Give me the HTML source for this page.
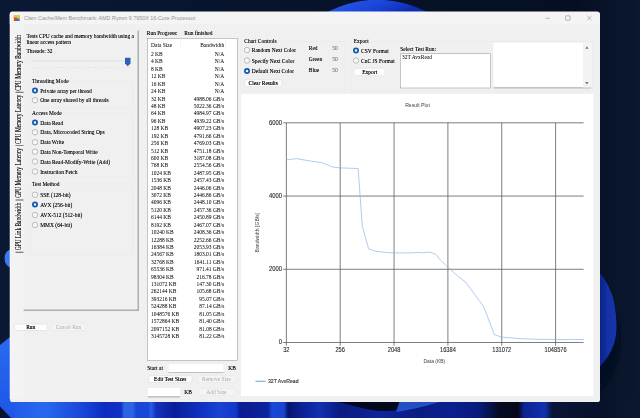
<!DOCTYPE html>
<html><head><meta charset="utf-8"><title>Clam Cache/Mem Benchmark</title>
<style>
html,body{margin:0;padding:0;}
body{width:640px;height:418px;overflow:hidden;position:relative;background:#07142b;font-family:"Liberation Serif",serif;}
#wall{position:absolute;left:0;top:0;}
#win{position:absolute;left:9.8px;top:11.6px;width:590px;height:390px;background:#f0f0f0;border-radius:2.6px;}
.abs{position:absolute;}
.t{position:absolute;height:8px;line-height:8px;font-size:6.6px;color:#000;white-space:nowrap;text-shadow:0 0 0.5px rgba(0,0,0,.55);transform:scaleX(0.83);transform-origin:0 50%;}
.w{text-shadow:0 0 0.4px rgba(0,0,0,.2);color:#111;}
.tr{transform-origin:100% 50%;}
.g{color:#9c9c9c;}
.sans{font-family:"Liberation Sans",sans-serif;}
.r,.rc{position:absolute;width:6px;height:6px;box-sizing:border-box;border-radius:50%;}
.r{border:0.6px solid #858585;background:#f7f7f7;}
.rc{border:1.9px solid #0f5aa8;background:#eaf4ff;}
.gb{position:absolute;box-sizing:border-box;border:0.5px solid #e8e8e8;border-radius:1px;}
.btn{position:absolute;box-sizing:border-box;background:#fdfdfd;border:0.5px solid #d6d6d6;border-radius:1px;font-size:6.6px;text-align:center;white-space:nowrap;color:#000;}
.btn span{display:inline-block;transform:scaleX(0.83);position:relative;top:-0.7px;text-shadow:0 0 0.5px rgba(0,0,0,.75);}
.btn.dis span{text-shadow:none;}
.btn.dis{background:#f5f5f5;border-color:#e4e4e4;color:#a8a8a8;}
.tb{position:absolute;background:#fff;box-shadow:0 0 0 0.4px #e4e4e4;border-radius:0.8px;}
.tb i{position:absolute;left:0;right:0;bottom:0;height:0.6px;background:#8a8a8a;border-radius:0 0 0.8px 0.8px;}
.lb{position:absolute;box-sizing:border-box;background:#fff;border:0.6px solid #8c8c8c;}
</style></head><body>
<svg id="wall" width="640" height="418" viewBox="0 0 640 418">
<defs>
<linearGradient id="bg" x1="0" y1="0" x2="1" y2="0"><stop offset="0" stop-color="#0a1834"/><stop offset="0.4" stop-color="#07142c"/><stop offset="0.9" stop-color="#060f22"/><stop offset="1" stop-color="#0a1830"/></linearGradient>
<linearGradient id="bot" x1="0" y1="0" x2="640" y2="0" gradientUnits="userSpaceOnUse">
<stop offset="0.0000" stop-color="#1d56e6"/><stop offset="0.0703" stop-color="#2868ee"/><stop offset="0.1250" stop-color="#1a48dc"/><stop offset="0.1641" stop-color="#0c2cc0"/>
<stop offset="0.1891" stop-color="#1030c8"/><stop offset="0.1938" stop-color="#2a64e0"/><stop offset="0.2078" stop-color="#2a64e0"/><stop offset="0.2125" stop-color="#1846d8"/>
<stop offset="0.2313" stop-color="#1846d8"/><stop offset="0.2359" stop-color="#2a5ce8"/><stop offset="0.2437" stop-color="#1432b8"/><stop offset="0.2734" stop-color="#0a1e9a"/><stop offset="0.3125" stop-color="#1030c0"/>
<stop offset="0.3438" stop-color="#1a42d4"/><stop offset="0.3688" stop-color="#1238c8"/><stop offset="0.3750" stop-color="#0a1c90"/><stop offset="0.4188" stop-color="#0c249c"/>
<stop offset="0.4250" stop-color="#1a48d8"/><stop offset="0.4437" stop-color="#1a44d0"/><stop offset="0.4500" stop-color="#081470"/><stop offset="0.4688" stop-color="#0c2090"/>
<stop offset="0.5000" stop-color="#1230b0"/><stop offset="0.5312" stop-color="#0a1c80"/><stop offset="0.5938" stop-color="#0c2498"/><stop offset="0.6562" stop-color="#0a1c80"/>
<stop offset="0.7031" stop-color="#0a2090"/><stop offset="0.7500" stop-color="#081a78"/><stop offset="0.7812" stop-color="#040a20"/><stop offset="0.8094" stop-color="#040818"/>
<stop offset="0.8187" stop-color="#0c2490"/><stop offset="0.8516" stop-color="#1030b0"/><stop offset="0.8625" stop-color="#0a1438"/><stop offset="0.9375" stop-color="#07122a"/><stop offset="1.0000" stop-color="#0a1830"/>
</linearGradient>
<linearGradient id="rb" x1="0" y1="0" x2="1" y2="0"><stop offset="0" stop-color="#0a2080"/><stop offset="0.5" stop-color="#1230a4"/><stop offset="1" stop-color="#1736ae"/></linearGradient>
<linearGradient id="tp" x1="0" y1="0" x2="1" y2="0.3"><stop offset="0" stop-color="#2a5cec"/><stop offset="0.6" stop-color="#1a44d8"/><stop offset="1" stop-color="#0c2cb0"/></linearGradient>
<filter id="bl" x="-20%" y="-20%" width="140%" height="140%"><feGaussianBlur stdDeviation="0.6"/></filter><filter id="bl2" x="-30%" y="-30%" width="160%" height="160%"><feGaussianBlur stdDeviation="2"/></filter>
<linearGradient id="lf" x1="0" y1="0" x2="0" y2="1"><stop offset="0" stop-color="#2a6af0"/><stop offset="1" stop-color="#1d56e6"/></linearGradient>
</defs>
<rect width="640" height="418" fill="url(#bg)"/>
<rect x="0" y="396" width="640" height="22" fill="url(#bot)"/>
<path d="M330 400 C350 404 365 411 385 411 C400 411 420 406 445 400 Z" fill="#04081c"/>
<path d="M396 412 C415 409 430 405 446 400 L400 400 Z" fill="#2a5ce0" opacity="0.85"/>
<path d="M500 400 L560 400 L545 418 L500 418 Z" fill="#040818" opacity="0.0"/>
<path d="M0 345 L10 337 L14 337 L14 418 L0 418 Z" fill="url(#lf)"/>
<path d="M0 406.5 L11 418 L0 418 Z" fill="#0a1430"/>
<ellipse cx="11" cy="258.4" rx="6.4" ry="9" fill="#3a7af0"/>
<path d="M598 300 C612 300 621 325 619 345 C617 365 610 380 598 392 Z" fill="#040920" filter="url(#bl2)"/>
<path d="M598 271 C606 279 612 292 614 302 C617 318 617.5 332 614.5 342 C611.5 352 606 361 598 368 Z" fill="url(#rb)" filter="url(#bl)"/>
<path d="M327 12 Q377 -12.5 427.5 12 Z" fill="url(#tp)"/>
</svg>
<div id="win">
<div class="abs" style="left:-9.8px;top:-11.6px;width:2560px;height:1672px;transform:scale(0.25);transform-origin:0 0;"><div class="abs" style="left:0;top:0;width:640px;height:418px;zoom:4;">
<div class="abs" style="left:9.8px;top:11.6px;width:590px;height:12.4px;background:#f4f4f4;border-radius:2.6px 2.6px 0 0;"></div>
<div class="abs" style="left:13.6px;top:15px;width:6.5px;height:6px;background:#e8c840;border-radius:1px;"></div>
<div class="abs" style="left:14px;top:17.5px;width:3px;height:3.5px;background:#c8503c;"></div>
<div class="abs" style="left:16px;top:18.5px;width:3.5px;height:2.5px;background:#4a6ed0;"></div>
<div class="t sans" style="left:24px;top:14.3px;font-size:5.7px;color:#949494;text-shadow:none;transform:scaleX(0.945);">Clam Cache/Mem Benchmark: AMD Ryzen 9 7950X 16-Core Processor</div>
<svg class="abs" style="left:540px;top:12px" width="60" height="14" viewBox="540 12 60 14">
<path d="M545.5 18.3 H549.8" stroke="#8a8a8a" stroke-width="0.6" fill="none"/>
<rect x="565.6" y="15.8" width="4.4" height="4.4" rx="0.6" stroke="#8a8a8a" stroke-width="0.6" fill="none"/>
<path d="M587.2 15.8 L591.6 20.2 M591.6 15.8 L587.2 20.2" stroke="#8a8a8a" stroke-width="0.6" fill="none"/>
</svg>
<div class="abs" style="left:9.8px;top:14px;width:0.9px;height:385px;background:#fcfcfc;"></div>
<div class="abs" style="left:10.7px;top:24px;width:13px;height:375px;background:#f3f3f3;"></div>
<div class="abs" style="left:23.6px;top:30.2px;width:115px;height:280.4px;box-sizing:border-box;border-top:0.5px solid #ececec;border-left:0.5px solid #f0f0f0;border-right:0.8px solid #6e6e6e;border-bottom:0.8px solid #6e6e6e;"></div>
<div class="t" style="left:18.6px;top:90.7px;font-size:7.2px;transform-origin:0 0;transform:translate(-4.1px,0) rotate(-90deg) scaleX(0.752);">CPU Memory Bandwidth</div>
<div class="t" style="left:18.6px;top:144.1px;font-size:7.2px;transform-origin:0 0;transform:translate(-4.1px,0) rotate(-90deg) scaleX(0.752);">CPU Memory Latency</div>
<div class="t" style="left:18.6px;top:197.8px;font-size:7.2px;transform-origin:0 0;transform:translate(-4.1px,0) rotate(-90deg) scaleX(0.752);">GPU Memory Latency</div>
<div class="t" style="left:18.6px;top:250.2px;font-size:7.2px;transform-origin:0 0;transform:translate(-4.1px,0) rotate(-90deg) scaleX(0.752);">GPU Link Bandwidth</div>
<div class="abs" style="left:15.6px;top:91.85px;width:7.8px;height:0.9px;background:#5a5a5a;"></div>
<div class="abs" style="left:15.6px;top:145.15px;width:7.8px;height:0.9px;background:#5a5a5a;"></div>
<div class="abs" style="left:15.6px;top:199.55px;width:7.8px;height:0.9px;background:#5a5a5a;"></div>
<div class="abs" style="left:15.6px;top:251.85px;width:7.8px;height:0.9px;background:#5a5a5a;"></div>
<div class="t " style="left:26.50px;top:31.87px;">Tests CPU cache and memory bandwidth using a</div>
<div class="t " style="left:26.50px;top:37.67px;">linear access pattern</div>
<div class="t " style="left:26.50px;top:46.27px;">Threads: 32</div>
<div class="abs" style="left:31px;top:60.5px;width:99px;height:1.2px;background:#e2e2e2;border-radius:0.6px;"></div>
<svg class="abs" style="left:124px;top:57px" width="8" height="10" viewBox="124 57 8 10"><path d="M125 57.7 H130.5 V63.6 L127.75 66.2 L125 63.6 Z" fill="#2a62b4"/></svg>
<div class="abs" style="left:32.00px;top:67px;width:0.6px;height:1px;background:#d4d4d4;"></div><div class="abs" style="left:35.13px;top:67px;width:0.6px;height:1px;background:#d4d4d4;"></div><div class="abs" style="left:38.26px;top:67px;width:0.6px;height:1px;background:#d4d4d4;"></div><div class="abs" style="left:41.39px;top:67px;width:0.6px;height:1px;background:#d4d4d4;"></div><div class="abs" style="left:44.52px;top:67px;width:0.6px;height:1px;background:#d4d4d4;"></div><div class="abs" style="left:47.65px;top:67px;width:0.6px;height:1px;background:#d4d4d4;"></div><div class="abs" style="left:50.78px;top:67px;width:0.6px;height:1px;background:#d4d4d4;"></div><div class="abs" style="left:53.91px;top:67px;width:0.6px;height:1px;background:#d4d4d4;"></div><div class="abs" style="left:57.04px;top:67px;width:0.6px;height:1px;background:#d4d4d4;"></div><div class="abs" style="left:60.17px;top:67px;width:0.6px;height:1px;background:#d4d4d4;"></div><div class="abs" style="left:63.30px;top:67px;width:0.6px;height:1px;background:#d4d4d4;"></div><div class="abs" style="left:66.43px;top:67px;width:0.6px;height:1px;background:#d4d4d4;"></div><div class="abs" style="left:69.56px;top:67px;width:0.6px;height:1px;background:#d4d4d4;"></div><div class="abs" style="left:72.69px;top:67px;width:0.6px;height:1px;background:#d4d4d4;"></div><div class="abs" style="left:75.82px;top:67px;width:0.6px;height:1px;background:#d4d4d4;"></div><div class="abs" style="left:78.95px;top:67px;width:0.6px;height:1px;background:#d4d4d4;"></div><div class="abs" style="left:82.08px;top:67px;width:0.6px;height:1px;background:#d4d4d4;"></div><div class="abs" style="left:85.21px;top:67px;width:0.6px;height:1px;background:#d4d4d4;"></div><div class="abs" style="left:88.34px;top:67px;width:0.6px;height:1px;background:#d4d4d4;"></div><div class="abs" style="left:91.47px;top:67px;width:0.6px;height:1px;background:#d4d4d4;"></div><div class="abs" style="left:94.60px;top:67px;width:0.6px;height:1px;background:#d4d4d4;"></div><div class="abs" style="left:97.73px;top:67px;width:0.6px;height:1px;background:#d4d4d4;"></div><div class="abs" style="left:100.86px;top:67px;width:0.6px;height:1px;background:#d4d4d4;"></div><div class="abs" style="left:103.99px;top:67px;width:0.6px;height:1px;background:#d4d4d4;"></div><div class="abs" style="left:107.12px;top:67px;width:0.6px;height:1px;background:#d4d4d4;"></div><div class="abs" style="left:110.25px;top:67px;width:0.6px;height:1px;background:#d4d4d4;"></div><div class="abs" style="left:113.38px;top:67px;width:0.6px;height:1px;background:#d4d4d4;"></div><div class="abs" style="left:116.51px;top:67px;width:0.6px;height:1px;background:#d4d4d4;"></div><div class="abs" style="left:119.64px;top:67px;width:0.6px;height:1px;background:#d4d4d4;"></div><div class="abs" style="left:122.77px;top:67px;width:0.6px;height:1px;background:#d4d4d4;"></div><div class="abs" style="left:125.90px;top:67px;width:0.6px;height:1px;background:#d4d4d4;"></div><div class="abs" style="left:129.03px;top:67px;width:0.6px;height:1px;background:#d4d4d4;"></div>
<div class="gb" style="left:29.8px;top:81px;width:103.6px;height:27px;"></div>
<div class="abs" style="left:31px;top:80px;width:39.5px;height:2px;background:#f0f0f0;"></div>
<div class="t" style="left:32px;top:76.67px;">Threading Mode</div>
<div class="rc" style="left:31.90px;top:87.50px"></div>
<div class="t " style="left:40.20px;top:86.17px;">Private array per thread</div>
<div class="r" style="left:31.90px;top:97.30px"></div>
<div class="t " style="left:40.20px;top:95.97px;">One array shared by all threads</div>
<div class="gb" style="left:29.8px;top:113px;width:103.6px;height:64.5px;"></div>
<div class="abs" style="left:31px;top:112px;width:31.2px;height:2px;background:#f0f0f0;"></div>
<div class="t" style="left:32px;top:108.67px;">Access Mode</div>
<div class="rc" style="left:31.90px;top:119.60px"></div>
<div class="t " style="left:40.20px;top:118.27px;">Data Read</div>
<div class="r" style="left:31.90px;top:129.20px"></div>
<div class="t " style="left:40.20px;top:127.87px;">Data, Microcoded String Ops</div>
<div class="r" style="left:31.90px;top:139.20px"></div>
<div class="t " style="left:40.20px;top:137.87px;">Data Write</div>
<div class="r" style="left:31.90px;top:148.80px"></div>
<div class="t " style="left:40.20px;top:147.47px;">Data Non-Temporal Write</div>
<div class="r" style="left:31.90px;top:158.60px"></div>
<div class="t " style="left:40.20px;top:157.27px;">Data Read-Modify-Write (Add)</div>
<div class="r" style="left:31.90px;top:168.60px"></div>
<div class="t " style="left:40.20px;top:167.27px;">Instruction Fetch</div>
<div class="gb" style="left:29.8px;top:183.7px;width:103.6px;height:71.6px;"></div>
<div class="abs" style="left:31px;top:182.7px;width:31.2px;height:2px;background:#f0f0f0;"></div>
<div class="t" style="left:32px;top:179.36999999999998px;">Test Method</div>
<div class="r" style="left:31.90px;top:191.70px"></div>
<div class="t " style="left:40.20px;top:190.37px;">SSE (128-bit)</div>
<div class="rc" style="left:31.90px;top:201.50px"></div>
<div class="t " style="left:40.20px;top:200.17px;">AVX (256-bit)</div>
<div class="r" style="left:31.90px;top:212.00px"></div>
<div class="t " style="left:40.20px;top:210.67px;">AVX-512 (512-bit)</div>
<div class="r" style="left:31.90px;top:222.10px"></div>
<div class="t " style="left:40.20px;top:220.77px;">MMX (64-bit)</div>
<div class="btn" style="left:13.9px;top:323.8px;width:33.7px;height:7px;line-height:6.4px;"><span>Run</span></div>
<div class="btn dis" style="left:51.7px;top:323.8px;width:33.7px;height:7px;line-height:6.4px;"><span>Cancel Run</span></div>
<div class="t " style="left:146.80px;top:29.07px;">Run Progress:</div>
<div class="t " style="left:184.20px;top:29.07px;">Run finished</div>
<div class="lb" style="left:147.2px;top:38.2px;width:90.3px;height:322.2px;"></div>
<div class="t w" style="left:151.00px;top:40.17px;">Data Size</div>
<div class="t tr w" style="left:0.00px;top:40.17px;left:auto;right:415.8px;">Bandwidth</div>
<div class="abs" style="left:180.5px;top:40px;width:0.5px;height:9px;background:#e8e8e8;"></div>
<div class="abs" style="left:225.5px;top:40px;width:0.5px;height:9px;background:#e8e8e8;"></div>
<div class="t w" style="left:151.00px;top:49.67px;">2 KB</div>
<div class="t tr w" style="left:0.00px;top:49.67px;left:auto;right:415.8px;">N/A</div>
<div class="t w" style="left:151.00px;top:57.09px;">4 KB</div>
<div class="t tr w" style="left:0.00px;top:57.09px;left:auto;right:415.8px;">N/A</div>
<div class="t w" style="left:151.00px;top:64.51px;">8 KB</div>
<div class="t tr w" style="left:0.00px;top:64.51px;left:auto;right:415.8px;">N/A</div>
<div class="t w" style="left:151.00px;top:71.93px;">12 KB</div>
<div class="t tr w" style="left:0.00px;top:71.93px;left:auto;right:415.8px;">N/A</div>
<div class="t w" style="left:151.00px;top:79.35px;">16 KB</div>
<div class="t tr w" style="left:0.00px;top:79.35px;left:auto;right:415.8px;">N/A</div>
<div class="t w" style="left:151.00px;top:86.77px;">24 KB</div>
<div class="t tr w" style="left:0.00px;top:86.77px;left:auto;right:415.8px;">N/A</div>
<div class="t w" style="left:151.00px;top:94.19px;">32 KB</div>
<div class="t tr w" style="left:0.00px;top:94.19px;left:auto;right:415.8px;">4988.06 GB/s</div>
<div class="t w" style="left:151.00px;top:101.61px;">48 KB</div>
<div class="t tr w" style="left:0.00px;top:101.61px;left:auto;right:415.8px;">5022.36 GB/s</div>
<div class="t w" style="left:151.00px;top:109.03px;">64 KB</div>
<div class="t tr w" style="left:0.00px;top:109.03px;left:auto;right:415.8px;">4984.97 GB/s</div>
<div class="t w" style="left:151.00px;top:116.45px;">96 KB</div>
<div class="t tr w" style="left:0.00px;top:116.45px;left:auto;right:415.8px;">4939.22 GB/s</div>
<div class="t w" style="left:151.00px;top:123.87px;">128 KB</div>
<div class="t tr w" style="left:0.00px;top:123.87px;left:auto;right:415.8px;">4907.23 GB/s</div>
<div class="t w" style="left:151.00px;top:131.29px;">192 KB</div>
<div class="t tr w" style="left:0.00px;top:131.29px;left:auto;right:415.8px;">4791.66 GB/s</div>
<div class="t w" style="left:151.00px;top:138.71px;">256 KB</div>
<div class="t tr w" style="left:0.00px;top:138.71px;left:auto;right:415.8px;">4769.03 GB/s</div>
<div class="t w" style="left:151.00px;top:146.13px;">512 KB</div>
<div class="t tr w" style="left:0.00px;top:146.13px;left:auto;right:415.8px;">4751.18 GB/s</div>
<div class="t w" style="left:151.00px;top:153.55px;">600 KB</div>
<div class="t tr w" style="left:0.00px;top:153.55px;left:auto;right:415.8px;">3187.08 GB/s</div>
<div class="t w" style="left:151.00px;top:160.97px;">768 KB</div>
<div class="t tr w" style="left:0.00px;top:160.97px;left:auto;right:415.8px;">2554.56 GB/s</div>
<div class="t w" style="left:151.00px;top:168.39px;">1024 KB</div>
<div class="t tr w" style="left:0.00px;top:168.39px;left:auto;right:415.8px;">2487.95 GB/s</div>
<div class="t w" style="left:151.00px;top:175.81px;">1536 KB</div>
<div class="t tr w" style="left:0.00px;top:175.81px;left:auto;right:415.8px;">2457.43 GB/s</div>
<div class="t w" style="left:151.00px;top:183.23px;">2048 KB</div>
<div class="t tr w" style="left:0.00px;top:183.23px;left:auto;right:415.8px;">2446.06 GB/s</div>
<div class="t w" style="left:151.00px;top:190.65px;">3072 KB</div>
<div class="t tr w" style="left:0.00px;top:190.65px;left:auto;right:415.8px;">2446.86 GB/s</div>
<div class="t w" style="left:151.00px;top:198.07px;">4096 KB</div>
<div class="t tr w" style="left:0.00px;top:198.07px;left:auto;right:415.8px;">2448.10 GB/s</div>
<div class="t w" style="left:151.00px;top:205.49px;">5120 KB</div>
<div class="t tr w" style="left:0.00px;top:205.49px;left:auto;right:415.8px;">2457.36 GB/s</div>
<div class="t w" style="left:151.00px;top:212.91px;">6144 KB</div>
<div class="t tr w" style="left:0.00px;top:212.91px;left:auto;right:415.8px;">2450.89 GB/s</div>
<div class="t w" style="left:151.00px;top:220.33px;">8192 KB</div>
<div class="t tr w" style="left:0.00px;top:220.33px;left:auto;right:415.8px;">2467.07 GB/s</div>
<div class="t w" style="left:151.00px;top:227.75px;">10240 KB</div>
<div class="t tr w" style="left:0.00px;top:227.75px;left:auto;right:415.8px;">2408.36 GB/s</div>
<div class="t w" style="left:151.00px;top:235.17px;">12288 KB</div>
<div class="t tr w" style="left:0.00px;top:235.17px;left:auto;right:415.8px;">2252.66 GB/s</div>
<div class="t w" style="left:151.00px;top:242.59px;">16384 KB</div>
<div class="t tr w" style="left:0.00px;top:242.59px;left:auto;right:415.8px;">2053.93 GB/s</div>
<div class="t w" style="left:151.00px;top:250.01px;">24567 KB</div>
<div class="t tr w" style="left:0.00px;top:250.01px;left:auto;right:415.8px;">1803.01 GB/s</div>
<div class="t w" style="left:151.00px;top:257.43px;">32768 KB</div>
<div class="t tr w" style="left:0.00px;top:257.43px;left:auto;right:415.8px;">1641.11 GB/s</div>
<div class="t w" style="left:151.00px;top:264.85px;">65536 KB</div>
<div class="t tr w" style="left:0.00px;top:264.85px;left:auto;right:415.8px;">971.41 GB/s</div>
<div class="t w" style="left:151.00px;top:272.27px;">98304 KB</div>
<div class="t tr w" style="left:0.00px;top:272.27px;left:auto;right:415.8px;">216.78 GB/s</div>
<div class="t w" style="left:151.00px;top:279.69px;">131072 KB</div>
<div class="t tr w" style="left:0.00px;top:279.69px;left:auto;right:415.8px;">147.30 GB/s</div>
<div class="t w" style="left:151.00px;top:287.11px;">262144 KB</div>
<div class="t tr w" style="left:0.00px;top:287.11px;left:auto;right:415.8px;">105.68 GB/s</div>
<div class="t w" style="left:151.00px;top:294.53px;">393216 KB</div>
<div class="t tr w" style="left:0.00px;top:294.53px;left:auto;right:415.8px;">95.07 GB/s</div>
<div class="t w" style="left:151.00px;top:301.95px;">524288 KB</div>
<div class="t tr w" style="left:0.00px;top:301.95px;left:auto;right:415.8px;">87.14 GB/s</div>
<div class="t w" style="left:151.00px;top:309.37px;">1048576 KB</div>
<div class="t tr w" style="left:0.00px;top:309.37px;left:auto;right:415.8px;">81.05 GB/s</div>
<div class="t w" style="left:151.00px;top:316.79px;">1572864 KB</div>
<div class="t tr w" style="left:0.00px;top:316.79px;left:auto;right:415.8px;">81.40 GB/s</div>
<div class="t w" style="left:151.00px;top:324.21px;">2097152 KB</div>
<div class="t tr w" style="left:0.00px;top:324.21px;left:auto;right:415.8px;">81.08 GB/s</div>
<div class="t w" style="left:151.00px;top:331.63px;">3145728 KB</div>
<div class="t tr w" style="left:0.00px;top:331.63px;left:auto;right:415.8px;">81.22 GB/s</div>
<div class="t " style="left:147.20px;top:363.27px;">Start at</div>
<div class="tb" style="left:168.4px;top:363.8px;width:55.1px;height:9px;"><i></i></div>
<div class="t " style="left:228.20px;top:363.27px;">KB</div>
<div class="btn" style="left:148.5px;top:375.6px;width:43.7px;height:7.2px;line-height:6.6px;"><span>Edit Test Sizes</span></div>
<div class="btn dis" style="left:197.8px;top:375.6px;width:37.5px;height:7.2px;line-height:6.6px;"><span>Remove Size</span></div>
<div class="tb" style="left:147.6px;top:387.8px;width:33px;height:9.4px;"><i></i></div>
<div class="t " style="left:184.30px;top:387.27px;">KB</div>
<div class="btn dis" style="left:197.8px;top:388.4px;width:37.5px;height:7px;line-height:6.4px;"><span>Add Size</span></div>
<div class="gb" style="left:240.4px;top:41.2px;width:105.6px;height:49.8px;"></div>
<div class="abs" style="left:243.2px;top:40.2px;width:39.5px;height:2px;background:#f0f0f0;"></div>
<div class="t" style="left:244.2px;top:36.870000000000005px;">Chart Controls</div>
<div class="r" style="left:243.90px;top:47.10px"></div>
<div class="t " style="left:251.80px;top:45.77px;">Random Next Color</div>
<div class="r" style="left:243.90px;top:57.60px"></div>
<div class="t " style="left:251.80px;top:56.27px;">Specify Next Color</div>
<div class="rc" style="left:243.90px;top:68.10px"></div>
<div class="t " style="left:251.80px;top:66.77px;">Default Next Color</div>
<div class="t " style="left:308.70px;top:43.47px;">Red</div>
<div class="t g" style="left:332.20px;top:43.47px;">50</div>
<div class="t " style="left:308.70px;top:54.77px;">Green</div>
<div class="t g" style="left:332.20px;top:54.77px;">50</div>
<div class="t " style="left:308.70px;top:65.87px;">Blue</div>
<div class="t g" style="left:332.20px;top:65.87px;">50</div>
<div class="btn" style="left:244.6px;top:79.4px;width:37.3px;height:7.6px;line-height:7px;"><span>Clear Results</span></div>
<div class="gb" style="left:350.5px;top:41.2px;width:242.5px;height:50.4px;"></div>
<div class="abs" style="left:352.8px;top:40.2px;width:17.5px;height:2px;background:#f0f0f0;"></div>
<div class="t" style="left:353.8px;top:36.870000000000005px;">Export</div>
<div class="rc" style="left:352.90px;top:47.50px"></div>
<div class="t " style="left:361.00px;top:46.17px;">CSV Format</div>
<div class="r" style="left:352.90px;top:57.60px"></div>
<div class="t " style="left:361.00px;top:56.27px;">CnC JS Format</div>
<div class="btn" style="left:353.8px;top:67.9px;width:31.8px;height:8px;line-height:7.4px;"><span>Export</span></div>
<div class="t " style="left:400.30px;top:44.27px;">Select Test Run:</div>
<div class="lb" style="left:399.9px;top:53.4px;width:90.8px;height:34.8px;"></div>
<div class="t w" style="left:402.00px;top:53.07px;">32T AvxRead</div>
<div class="tb" style="left:493.2px;top:42.5px;width:98.2px;height:45.7px;"><i></i></div>
<div class="abs" style="left:583px;top:43px;width:8px;height:44.5px;background:#f3f3f3;"></div>
<svg class="abs" style="left:583px;top:43px" width="8" height="45" viewBox="583 43 8 45"><path d="M585.2 48.8 L586.9 46.2 L588.6 48.8 Z M585.2 81.9 L586.9 84.5 L588.6 81.9 Z" fill="#7a7a7a"/></svg>
<svg class="abs" style="left:241px;top:94px" width="352.5" height="302.3" viewBox="241 94 352.5 302.3" font-family="Liberation Sans, sans-serif">
<rect x="241" y="94" width="352.5" height="302.3" fill="#fff"/>
<path d="M286.35 122.8 V345.70 M340.20 122.8 V345.70 M394.05 122.8 V345.70 M447.90 122.8 V345.70 M501.75 122.8 V345.70 M555.60 122.8 V345.70 M283.15 342.50 H583.6 M283.15 269.27 H583.6 M283.15 196.04 H583.6 M283.15 122.81 H583.6" stroke="#5c5c5c" stroke-width="0.8" fill="none"/>
<polyline points="286.35,159.86 296.85,158.61 304.30,159.98 314.80,161.65 322.25,162.82 332.75,167.05 340.20,167.88 358.15,168.54 362.26,225.81 368.65,248.96 376.10,251.40 386.60,252.52 394.05,252.94 404.55,252.91 412.00,252.86 417.78,252.52 422.50,252.76 429.95,252.17 435.73,254.32 440.45,260.02 447.90,267.30 458.39,276.48 465.85,282.41 483.80,306.93 494.30,334.56 501.75,337.11 519.70,338.63 530.20,339.02 537.65,339.31 555.60,339.53 566.10,339.52 573.55,339.53 584.05,339.53" fill="none" stroke="#8ab6ec" stroke-width="0.7"/>
<g opacity="0.99" fill="#2a2a2a" stroke="#2a2a2a" stroke-width="0.12">
<text transform="translate(282.00,344.50) scale(0.88,1)" font-size="6.6" text-anchor="end">0</text>
<text transform="translate(282.00,271.27) scale(0.88,1)" font-size="6.6" text-anchor="end">2000</text>
<text transform="translate(282.00,198.04) scale(0.88,1)" font-size="6.6" text-anchor="end">4000</text>
<text transform="translate(282.00,124.81) scale(0.88,1)" font-size="6.6" text-anchor="end">6000</text>
<text transform="translate(286.35,352.50) scale(0.86,1)" font-size="6.6" text-anchor="middle">32</text>
<text transform="translate(340.20,352.50) scale(0.86,1)" font-size="6.6" text-anchor="middle">256</text>
<text transform="translate(394.05,352.50) scale(0.86,1)" font-size="6.6" text-anchor="middle">2048</text>
<text transform="translate(447.90,352.50) scale(0.86,1)" font-size="6.6" text-anchor="middle">16384</text>
<text transform="translate(501.75,352.50) scale(0.86,1)" font-size="6.6" text-anchor="middle">131072</text>
<text transform="translate(555.60,352.50) scale(0.86,1)" font-size="6.6" text-anchor="middle">1048576</text>
<g stroke="none" fill="#3c3c3c">
<text transform="translate(417.50,107.50) scale(0.84,1)" font-size="6.1" text-anchor="middle">Result Plot</text>
<text transform="translate(434.30,363.30) scale(0.88,1)" font-size="5.6" text-anchor="middle">Data (KB)</text>
<text transform="translate(258.90,232.60) rotate(-90) scale(1.03,1)" font-size="5.0" text-anchor="middle">Bandwidth [GB/s]</text>
</g>
<text transform="translate(268.00,383.50) scale(0.87,1)" font-size="5.9" text-anchor="start">32T AvxRead</text>
</g>
<path d="M255.5 381.3 H265.5" stroke="#4a88d4" stroke-width="0.8"/>
</svg>
</div></div></div>
</body></html>
